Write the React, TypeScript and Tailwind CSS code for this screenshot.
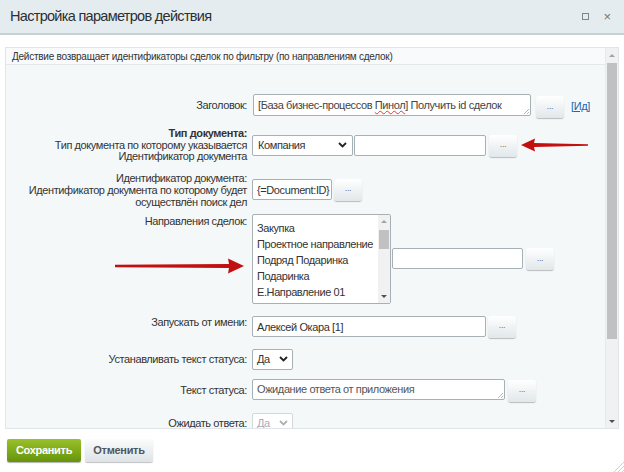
import React from "react";

const Dots = ({ cls = "" }: { cls?: string }) => (
  <div
    className={
      "flex h-[22px] w-[28px] items-center justify-center rounded-[3px] bg-gradient-to-b from-[#ffffff] to-[#e1e7ea] text-[9px] leading-none text-[#6b7479] shadow-[0_1px_1px_rgba(0,0,0,0.25)] " +
      cls
    }
  >
    <span className="-mt-[2px]">...</span>
  </div>
);

const Chevron = ({ color = "#222" }: { color?: string }) => (
  <svg width="9" height="6" viewBox="0 0 9 6">
    <path d="M1 1 L4.5 4.5 L8 1" fill="none" stroke={color} strokeWidth="1.8" />
  </svg>
);

const Grip = () => (
  <svg width="6" height="6" viewBox="0 0 6 6" className="absolute bottom-[1px] right-[1px]">
    <path d="M6 1 L1 6 M6 4 L4 6" stroke="#9aa" strokeWidth="0.8" />
  </svg>
);

export default function App() {
  return (
    <div
      className="relative h-[472px] w-[624px] overflow-hidden bg-white text-[#333]"
      style={{ fontFamily: '"Liberation Sans", Arial, sans-serif' }}
    >
      {/* Title bar */}
      <div className="flex h-[35px] items-center justify-between border-b-2 border-[#c9d0d4] bg-[#e5ecef] pl-[10px] pr-[13px]">
        <div className="text-[14.5px] tracking-[-0.7px] text-[#2b2f33]">Настройка параметров действия</div>
        <div className="flex items-center gap-[14px]">
          <div className="h-[7px] w-[7px] border border-[#7d878c]" />
          <div className="text-[13px] leading-none text-[#6d777c]">×</div>
        </div>
      </div>

      {/* Panel */}
      <div className="px-[5px] pt-[12px]">
        <div className="flex h-[382px] border border-[#dfe5e8] bg-[#f5f8f9]">
          <div className="flex-1 overflow-hidden">
            <div className="flex h-[17px] items-center border-b border-[#e3e8ea] bg-[#f8fafb] pl-[6px] text-[10px] tracking-[-0.25px] text-[#333]">
              Действие возвращает идентификаторы сделок по фильтру (по направлениям сделок)
            </div>

            <div className="text-[11px] leading-[12px] tracking-[-0.4px]">
              {/* Заголовок */}
              <div className="mt-[29px] flex items-start">
                <div className="w-[241px] pt-[5px] text-right text-[#333]">Заголовок:</div>
                <div className="ml-[6px] flex items-start">
                  <div className="relative h-[22px] w-[278px] whitespace-nowrap rounded-[2px] border border-[#a7b0b5] bg-white px-[4px] pt-[4px] text-[#444]">
                    [База бизнес-процессов{" "}
                    <span className="underline decoration-[#e33] decoration-wavy decoration-[1px]">Пинол</span>]
                    Получить id сделок
                    <Grip />
                  </div>
                  <Dots cls="ml-[5px] mt-[2px]" />
                  <div className="ml-[7px] mt-[6px] text-[#2067b0]">
                    [<span className="underline">Ид</span>]
                  </div>
                </div>
              </div>

              {/* Тип документа */}
              <div className="mt-[10px] flex items-center">
                <div className="w-[241px] text-right leading-[11.5px] text-[#333]">
                  <div className="font-bold">Тип документа:</div>
                  <div>Тип документа по которому указывается</div>
                  <div>Идентификатор документа</div>
                </div>
                <div className="ml-[5px] flex items-center">
                  <div className="flex h-[21px] w-[101px] items-center justify-between rounded-[2px] border border-[#a7b0b5] bg-white pl-[5px] pr-[5px] text-[#333]">
                    <span>Компания</span>
                    <Chevron />
                  </div>
                  <div className="ml-[1px] h-[21px] w-[132px] rounded-[2px] border border-[#a7b0b5] bg-white" />
                  <Dots cls="ml-[3px] mt-[1px]" />
                </div>
              </div>

              {/* Идентификатор документа */}
              <div className="mt-[9px] flex items-center">
                <div className="w-[241px] text-right text-[#333]">
                  <div>Идентификатор документа:</div>
                  <div>Идентификатор документа по которому будет</div>
                  <div>осуществлён поиск дел</div>
                </div>
                <div className="ml-[5px] flex items-center">
                  <div className="flex h-[21px] w-[80px] items-center whitespace-nowrap rounded-[2px] border border-[#a7b0b5] bg-white px-[4px] text-[#333]">
                    {"{=Document:ID}"}
                  </div>
                  <Dots cls="ml-[2px]" />
                </div>
              </div>

              {/* Направления сделок */}
              <div className="mt-[6px] flex items-start">
                <div className="w-[241px] pt-[1px] text-right text-[#333]">Направления сделок:</div>
                <div className="ml-[5px] flex items-center">
                  <div className="relative flex h-[90px] w-[139px] rounded-[2px] border border-[#a7b0b5] bg-white">
                    <div className="flex-1 whitespace-nowrap pl-[4px] pt-[5px] leading-[16px] text-[#333]">
                      <div>Закупка</div>
                      <div>Проектное направление</div>
                      <div>Подряд Подаринка</div>
                      <div>Подаринка</div>
                      <div>Е.Направление 01</div>
                    </div>
                    <div className="relative w-[12px] bg-[#f1f1f1]">
                      <div className="absolute left-[3px] top-[5px] h-0 w-0 border-x-[3px] border-b-[3px] border-x-transparent border-b-[#a3a3a3]" />
                      <div className="absolute left-[1px] top-[15px] h-[19px] w-[10px] bg-[#c1c1c1]" />
                      <div className="absolute bottom-[5px] left-[3px] h-0 w-0 border-x-[3px] border-t-[3px] border-x-transparent border-t-[#505050]" />
                    </div>
                  </div>
                  <div className="ml-[1px] h-[21px] w-[131px] rounded-[2px] border border-[#a7b0b5] bg-white" />
                  <Dots cls="ml-[3px] mt-[1px]" />
                </div>
              </div>

              {/* Запускать от имени */}
              <div className="mt-[12px] flex items-start">
                <div className="w-[241px] text-right text-[#333]">Запускать от имени:</div>
                <div className="ml-[5px] flex items-center">
                  <div className="flex h-[21px] w-[234px] items-center rounded-[2px] border border-[#a7b0b5] bg-white px-[4px] text-[#333]">
                    Алексей Окара [1]
                  </div>
                  <Dots cls="ml-[2px]" />
                </div>
              </div>

              {/* Устанавливать текст статуса */}
              <div className="mt-[11px] flex items-center">
                <div className="w-[241px] text-right text-[#333]">Устанавливать текст статуса:</div>
                <div className="ml-[5px] flex h-[21px] w-[41px] items-center justify-between rounded-[2px] border border-[#a7b0b5] bg-white px-[4px] text-[#333]">
                  <span>Да</span>
                  <Chevron />
                </div>
              </div>

              {/* Текст статуса */}
              <div className="mt-[9px] flex items-center">
                <div className="w-[241px] text-right text-[#333]">Текст статуса:</div>
                <div className="ml-[5px] flex items-start">
                  <div className="relative h-[21px] w-[253px] rounded-[2px] border border-[#a7b0b5] bg-white px-[4px] pt-[3px] text-[#555]">
                    Ожидание ответа от приложения
                    <Grip />
                  </div>
                  <Dots cls="ml-[3px] mt-[1px]" />
                </div>
              </div>

              {/* Ожидать ответа */}
              <div className="mt-[11px] flex items-center">
                <div className="w-[241px] text-right text-[#333]">Ожидать ответа:</div>
                <div className="ml-[5px] flex h-[21px] w-[41px] items-center justify-between rounded-[2px] border border-[#d3d8db] bg-white px-[4px] text-[#aab]">
                  <span>Да</span>
                  <Chevron color="#aab2b6" />
                </div>
              </div>
            </div>
          </div>

          {/* Scrollbar */}
          <div className="relative w-[13px] border-l border-[#e6eaec] bg-[#f1f1f1]">
            <div className="absolute left-[3px] top-[6px] h-0 w-0 border-x-[3px] border-b-[3px] border-x-transparent border-b-[#a3a3a3]" />
            <div className="absolute left-[1px] top-[15px] h-[276px] w-[10px] bg-[#c1c1c1]" />
            <div className="absolute bottom-[5px] left-[3px] h-0 w-0 border-x-[3px] border-t-[3px] border-x-transparent border-t-[#505050]" />
          </div>
        </div>
      </div>

      {/* Buttons */}
      <div className="ml-[7px] mt-[10px] flex gap-[4px] text-[11px] tracking-[-0.3px]">
        <div className="flex h-[23px] w-[74px] items-center justify-center rounded-[2px] bg-gradient-to-b from-[#9ac12b] to-[#659408] font-bold text-white shadow-[0_1px_1px_rgba(0,0,0,0.3)]">
          Сохранить
        </div>
        <div className="flex h-[23px] w-[68px] items-center justify-center rounded-[2px] bg-gradient-to-b from-[#fbfcfc] to-[#dde3e6] font-bold text-[#4f575c] shadow-[0_1px_1px_rgba(0,0,0,0.25)]">
          Отменить
        </div>
      </div>

      {/* Window resize grip */}
      <svg className="absolute bottom-0 right-0" width="12" height="12" viewBox="0 0 12 12">
        <path d="M12 2 L2 12 M12 6 L6 12 M12 10 L10 12" stroke="#c8cfd2" strokeWidth="1" />
      </svg>

      {/* Red annotation arrows */}
      <svg className="absolute left-[520px] top-[137px]" width="70" height="16" viewBox="0 0 70 16">
        <path d="M1 8 L15 1.5 L14 6 L68 7.2 L68 8.8 L14 10 L15 14.5 Z" fill="#c20f0f" />
      </svg>
      <svg className="absolute left-[113px] top-[257px]" width="132" height="18" viewBox="0 0 132 18">
        <path d="M131 9 L115 1.5 L116 7 L2 7.8 L2 10.2 L116 11 L115 16.5 Z" fill="#c20f0f" />
      </svg>
    </div>
  );
}
